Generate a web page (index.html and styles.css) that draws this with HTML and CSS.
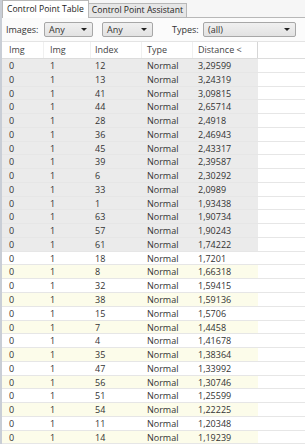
FILE: index.html
```html
<!DOCTYPE html>
<html>
<head>
<meta charset="utf-8">
<link rel="stylesheet" href="styles.css">
</head>
<body>
<div class="win">
  <div class="tabs">
    <div class="tab active">Control Point Table</div>
    <div class="tab">Control Point Assistant</div>
  </div>
  <div class="toolbar">
    <span class="lbl">Images:</span>
    <div class="combo c1"><span>Any</span><i class="arr"></i></div>
    <div class="combo c2"><span>Any</span><i class="arr"></i></div>
    <span class="lbl types">Types:</span>
    <div class="combo c3"><span>(all)</span><i class="arr"></i></div>
  </div>
  <div class="grid" id="grid">
    <div class="row head">
      <div class="c a">Img</div><div class="c b">Img</div><div class="c d">Index</div><div class="c e">Type</div><div class="c f">Distance &lt;</div><div class="c g"></div>
    </div>
  </div>
</div>
<script>
var data=[["12","3,29599"],["13","3,24319"],["41","3,09815"],["44","2,65714"],["28","2,4918"],["36","2,46943"],["45","2,43317"],["39","2,39587"],["6","2,30292"],["33","2,0989"],["1","1,93438"],["63","1,90734"],["57","1,90243"],["61","1,74222"],["18","1,7201"],["8","1,66318"],["32","1,59415"],["38","1,59136"],["15","1,5706"],["7","1,4458"],["4","1,41678"],["35","1,38364"],["47","1,33992"],["56","1,30746"],["51","1,25599"],["54","1,22225"],["11","1,20348"],["14","1,19239"]];
var g=document.getElementById('grid');
data.forEach(function(r,i){
  var cls='row';
  if(i<14) cls+=' sel'; else if((i-14)%2==1) cls+=' alt';
  var d=document.createElement('div');
  d.className=cls;
  d.innerHTML='<div class="c a">0</div><div class="c b">1</div><div class="c d">'+r[0]+'</div><div class="c e">Normal</div><div class="c f">'+r[1]+'</div><div class="c g"></div>';
  g.appendChild(d);
});
</script>
</body>
</html>
```
FILE: styles.css
```css
html,body{margin:0;padding:0;background:#fff;}
body{font-family:"Open Sans","Noto Sans",sans-serif;font-size:9px;color:#333;}
.win{width:305px;height:444px;overflow:hidden;border-left:2px solid #c9ced6;box-sizing:border-box;background:#fff;}
.tabs{display:flex;height:17px;align-items:flex-end;border-bottom:1px solid #b8b8b8;background:#f6f6f6;}
.tab{height:14px;line-height:13px;padding:0 3px;border:1px solid #b8b8b8;border-bottom:none;background:#e6e6e6;color:#222;box-sizing:border-box;margin-left:-1px;white-space:nowrap;font-size:8.6px;}
.tab.active{height:18px;line-height:16px;background:#fff;margin-left:0;margin-bottom:-1px;padding:0 4px;}
.toolbar{height:23px;display:flex;align-items:center;background:#fbfbfb;border-bottom:1px solid #e4e4e4;}
.lbl{color:#333;margin-left:4px;width:38px;}
.lbl.types{margin-left:19px;width:31px;}
.combo{height:15px;border:1px solid #a7a7a7;border-radius:2px;background:linear-gradient(#f0f0f0,#e2e2e2);box-sizing:border-box;display:flex;align-items:center;justify-content:space-between;padding:0 5px 0 4px;color:#333;}
.c1{width:49px;}
.c2{width:51px;margin-left:9px;}
.c3{width:93px;}
.arr{width:0;height:0;border-left:3px solid transparent;border-right:3px solid transparent;border-top:3px solid #222;}
.grid{display:flex;flex-direction:column;}
.row{display:flex;height:13.78px;line-height:13px;border-bottom:1px solid #e6e6e6;box-sizing:border-box;}
.row.head{height:17px;line-height:16px;border-bottom:1px solid #dcdcdc;color:#444;}
.row.head .c{border-right:1px solid #f0f0f0;}
.row.head .f{border-right:1px solid #d6d6d6;}
.row.head .g{border-right:none;}
.c{box-sizing:border-box;padding-left:7px;white-space:nowrap;}
.a{width:42px;}
.b{width:47px;padding-left:6px;}
.d{width:51px;padding-left:4px;}
.e{width:51px;padding-left:5px;}
.f{width:65px;padding-left:5px;}
.g{flex:1;}
.row.sel .c:not(.g){background:#ebebeb;}
.row.alt .c:not(.g){background:#fcfcea;}
```
